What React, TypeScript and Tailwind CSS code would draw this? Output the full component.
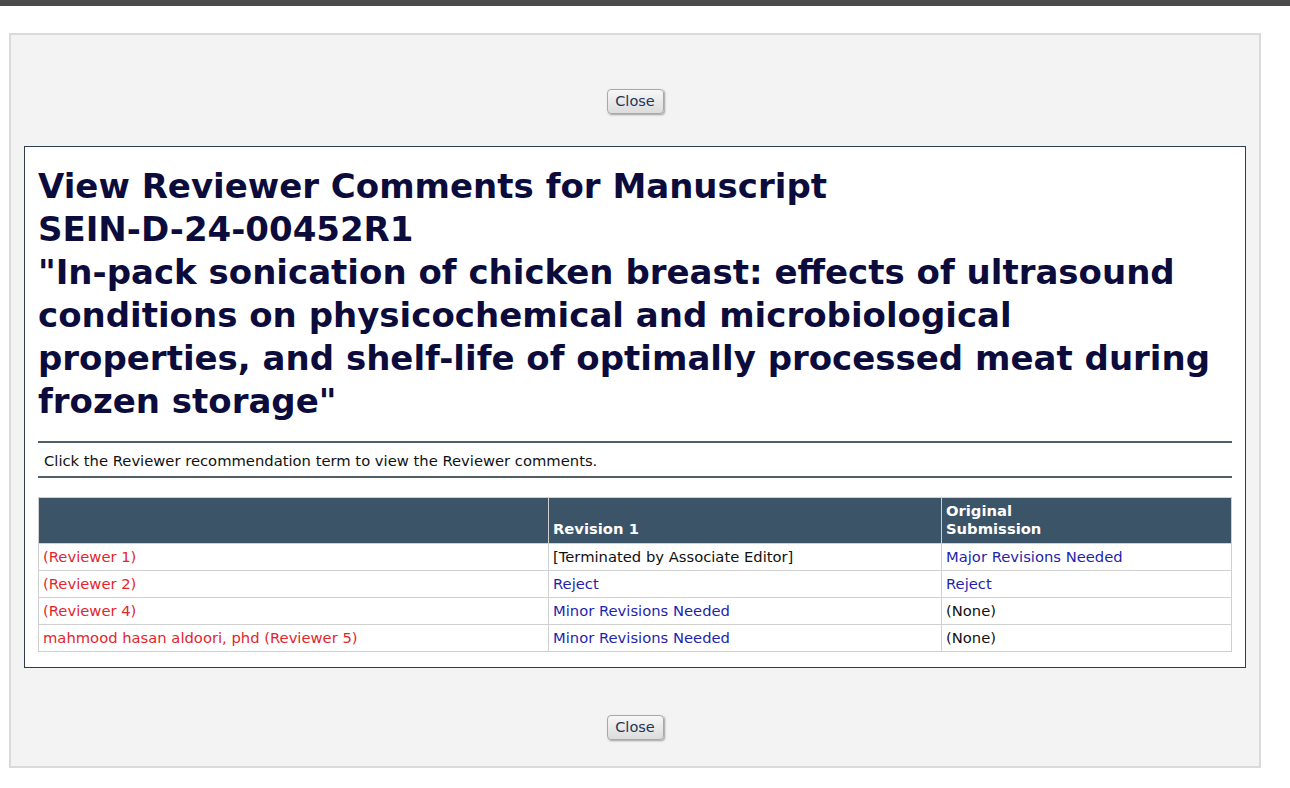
import React from 'react'

interface ReviewerRow {
  name: string
  revision: string
  revisionLink: boolean
  original: string
  originalLink: boolean
}

const rows: ReviewerRow[] = [
  { name: '(Reviewer 1)', revision: '[Terminated by Associate Editor]', revisionLink: false, original: 'Major Revisions Needed', originalLink: true },
  { name: '(Reviewer 2)', revision: 'Reject', revisionLink: true, original: 'Reject', originalLink: true },
  { name: '(Reviewer 4)', revision: 'Minor Revisions Needed', revisionLink: true, original: '(None)', originalLink: false },
  { name: 'mahmood hasan aldoori, phd (Reviewer 5)', revision: 'Minor Revisions Needed', revisionLink: true, original: '(None)', originalLink: false },
]

function CloseButton() {
  return (
    <button className="h-[25px] w-[57px] rounded-[4px] border border-[#a9a9a9] bg-gradient-to-b from-[#f7f7f7] to-[#dcdcdc] pt-[1px] text-[14.5px] text-[#1d3557] shadow-[1px_1px_2px_rgba(0,0,0,0.35)]">
      Close
    </button>
  )
}

function Cell({ text, link }: { text: string; link: boolean }) {
  return (
    <td className={`border border-[#d0d0d0] px-[4px] h-[27px] align-middle ${link ? 'text-[#1f1fb0]' : 'text-[#111]'}`}>
      {text}
    </td>
  )
}

export default function App() {
  return (
    <div className="min-h-[788px] bg-white font-['DejaVu_Sans',Verdana,sans-serif]">
      {/* top bar */}
      <div className="h-[6px] bg-[#4b4b4b]" />

      <div className="pt-[27px] pl-[9px] pr-[29px]">
        <div className="border-2 border-[#dadada] bg-[#f3f3f3] pt-[54px] pb-[26px] px-[13px]">
          <div className="flex justify-center">
            <CloseButton />
          </div>

          {/* main box */}
          <div className="mt-[32px] border border-[#2e3e4e] bg-white px-[13px] pt-[18px] pb-[15px]">
            <h1 className="text-[34px] font-bold leading-[43px] text-[#0c0c3c] whitespace-nowrap">
              <span className="block">View Reviewer Comments for Manuscript</span>
              <span className="block">SEIN-D-24-00452R1</span>
              <span className="block">"In-pack sonication of chicken breast: effects of ultrasound</span>
              <span className="block">conditions on physicochemical and microbiological</span>
              <span className="block">properties, and shelf-life of optimally processed meat during</span>
              <span className="block">frozen storage"</span>
            </h1>

            <div className="mt-[18px] border-t-2 border-b-2 border-[#505e66] px-[6px] pt-[3px] h-[37px] flex items-center text-[14.75px] text-[#111]">
              Click the Reviewer recommendation term to view the Reviewer comments.
            </div>

            <table className="mt-[19px] w-full border-collapse text-[14.75px]">
              <thead>
                <tr className="bg-[#3b5467] text-white font-bold">
                  <th className="w-[510px] border border-[#d0d0d0] h-[46px]" />
                  <th className="w-[393px] border border-[#d0d0d0] px-[4px] pb-[5px] text-left align-bottom leading-[18px]">Revision 1</th>
                  <th className="border border-[#d0d0d0] px-[4px] pb-[5px] text-left align-bottom leading-[18px]">
                    Original
                    <br />
                    Submission
                  </th>
                </tr>
              </thead>
              <tbody>
                {rows.map((r) => (
                  <tr key={r.name}>
                    <td className="border border-[#d0d0d0] px-[4px] h-[27px] align-middle text-[#e2262c]">{r.name}</td>
                    <Cell text={r.revision} link={r.revisionLink} />
                    <Cell text={r.original} link={r.originalLink} />
                  </tr>
                ))}
              </tbody>
            </table>
          </div>

          <div className="mt-[47px] flex justify-center">
            <CloseButton />
          </div>
        </div>
      </div>
    </div>
  )
}
